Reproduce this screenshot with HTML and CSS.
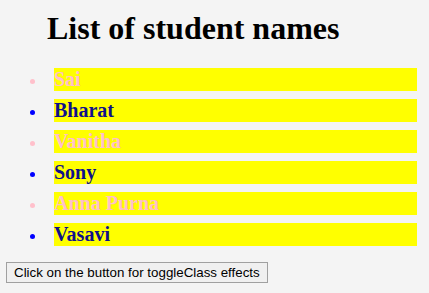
FILE: index.html
```html
<!DOCTYPE html>
<html>
<head>
<meta charset="utf-8">
<link rel="stylesheet" href="styles.css">
</head>
<body>
<h1 class="title">List of student names</h1>
<ul class="students">
  <li class="student pink">Sai</li>
  <li class="student blue">Bharat</li>
  <li class="student pink">Vanitha</li>
  <li class="student blue">Sony</li>
  <li class="student pink">Anna Purna</li>
  <li class="student blue">Vasavi</li>
</ul>
<button class="toggle-btn">Click on the button for toggleClass effects</button>
</body>
</html>
```
FILE: styles.css
```css
html, body {
  background: #f4f4f4;
}
body {
  margin: 0;
  padding: 0 6px;
  font-family: "Liberation Serif", "Times New Roman", serif;
}
.title {
  margin: 10px 0 0 41px;
  font-size: 32px;
  line-height: 37px;
  font-weight: bold;
  color: #000;
}
.students {
  margin: 21px 6px 0 0;
  padding-left: 48px;
  list-style: none;
}
.student {
  position: relative;
  background: #ffff00;
  height: 23px;
  line-height: 23px;
  font-size: 20px;
  font-weight: bold;
  margin-bottom: 8px;
}
.student::before {
  content: "";
  position: absolute;
  left: -24px;
  top: 11px;
  width: 5px;
  height: 5px;
  border-radius: 50%;
}
.student.pink {
  color: #ffc0cb;
}
.student.pink::before {
  background: #ffc0cb;
}
.student.blue {
  color: #10108c;
}
.student.blue::before {
  background: #0000ff;
}
.toggle-btn {
  display: block;
  margin-top: 16px;
  height: 21px;
  padding: 0 7px;
  font-family: "Liberation Sans", Arial, sans-serif;
  font-size: 13.33px;
  color: #000;
  background: #f0f0f0;
  border: 1px solid #a0a0a0;
  border-radius: 0;
}
```
